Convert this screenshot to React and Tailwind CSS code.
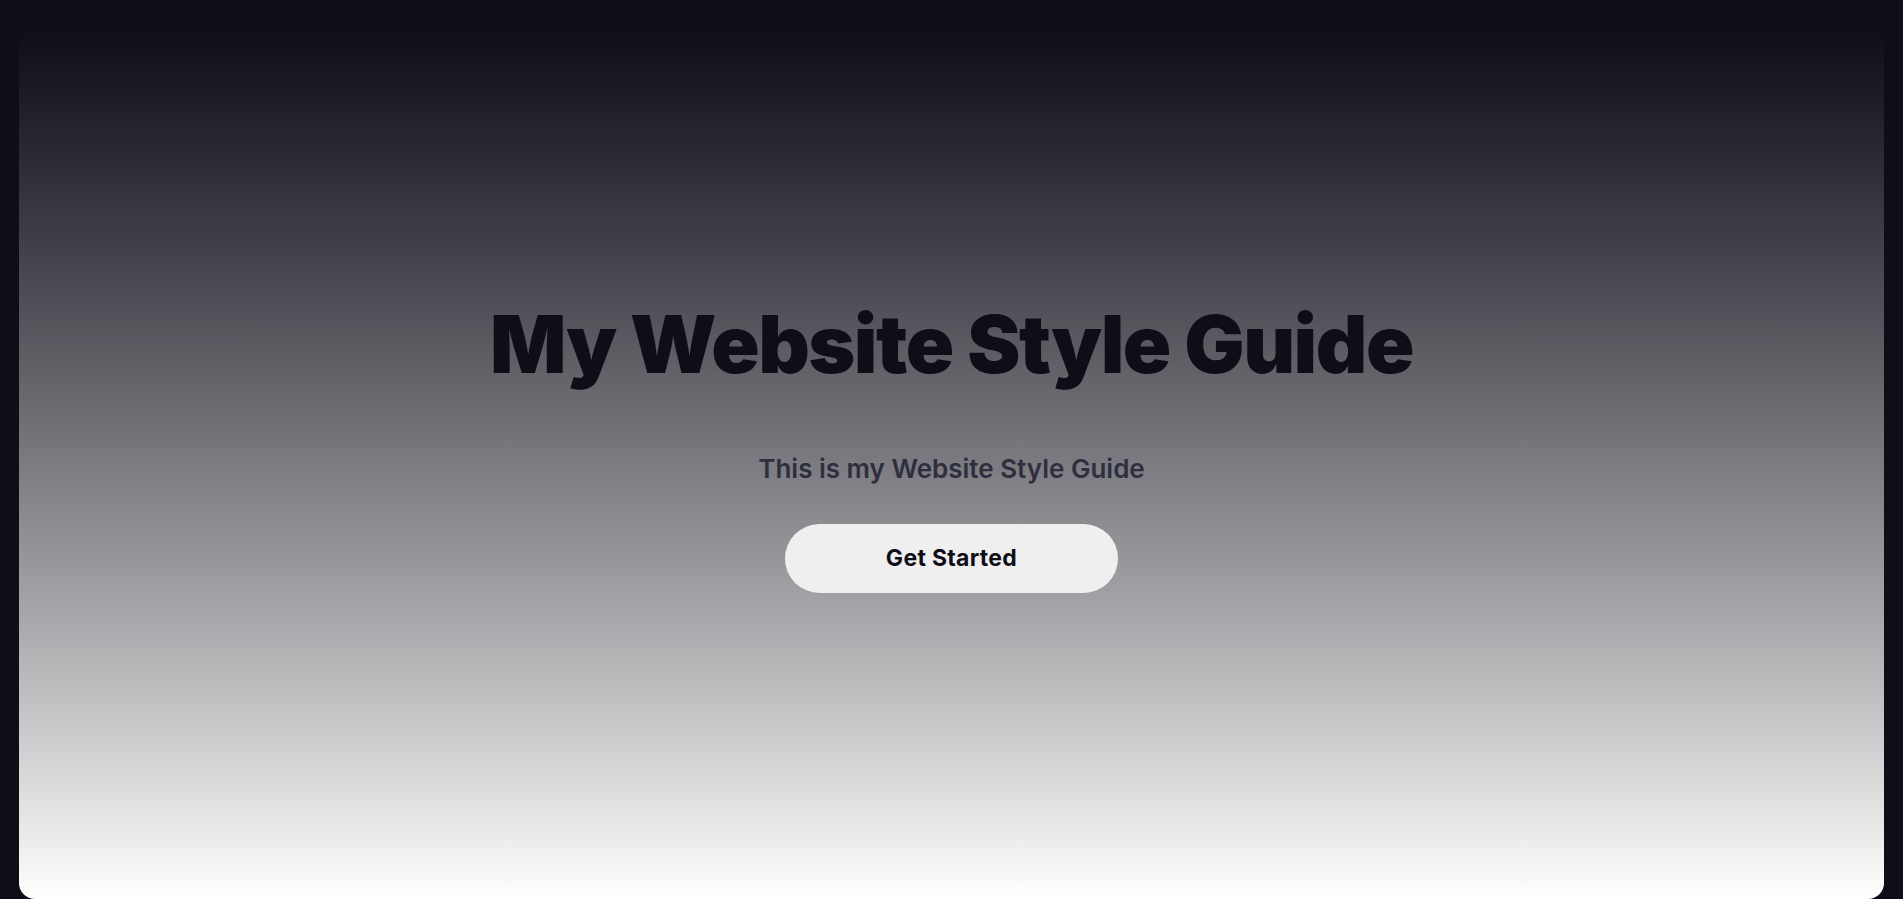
const App = () => {
  return (
    <div className="min-h-screen bg-[#0f0e17] px-[19px] pt-[28px] font-['Inter',sans-serif]">
      <section className="h-[871px] rounded-[16px] bg-gradient-to-b from-[#0f0e17] to-[#fffffe] flex flex-col items-center pt-[276px]">
        {/* Hero */}
        <h1 className="text-[80px] leading-none font-black tracking-[-1.5px] text-[#0f0e17]">
          My Website Style Guide
        </h1>
        <p className="mt-[72px] text-[26px] leading-none font-semibold text-[#2e2f3e]">
          This is my Website Style Guide
        </p>
        <button className="mt-[42px] w-[333px] h-[69px] rounded-full bg-[#efefef] text-[23px] font-bold tracking-[0.3px] text-[#0f0e17]">
          Get Started
        </button>
      </section>
    </div>
  );
};

export default App;
